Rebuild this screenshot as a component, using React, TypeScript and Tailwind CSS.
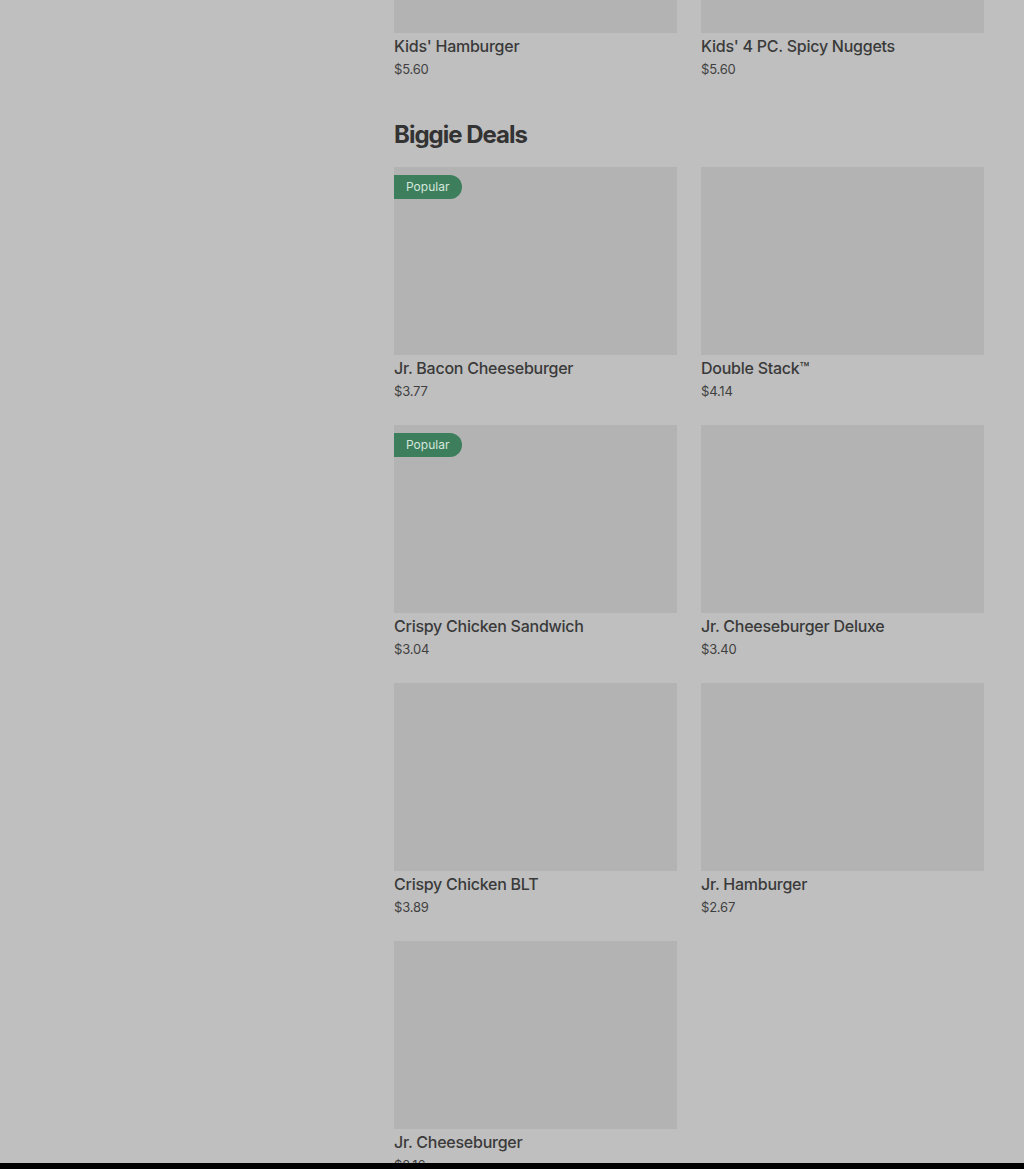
import React from "react";

type Item = { name: string; price: string; popular?: boolean };

const kids: Item[] = [
  { name: "Kids' Hamburger", price: "$5.60" },
  { name: "Kids' 4 PC. Spicy Nuggets", price: "$5.60" },
];

const biggie: Item[] = [
  { name: "Jr. Bacon Cheeseburger", price: "$3.77", popular: true },
  { name: "Double Stack™", price: "$4.14" },
  { name: "Crispy Chicken Sandwich", price: "$3.04", popular: true },
  { name: "Jr. Cheeseburger Deluxe", price: "$3.40" },
  { name: "Crispy Chicken BLT", price: "$3.89" },
  { name: "Jr. Hamburger", price: "$2.67" },
  { name: "Jr. Cheeseburger", price: "$2.16" },
];

function Card({ item }: { item: Item }) {
  return (
    <div className="flex flex-col pb-[24px]">
      <div className="relative h-[188px] bg-[#b3b3b3]">
        {item.popular && (
          <div className="absolute left-0 top-[8px] flex h-[24px] items-center rounded-r-full bg-[#3d7e5c] pl-[12px] pr-[13px] text-[12px] leading-none text-[#d6e6dc]">
            Popular
          </div>
        )}
      </div>
      <div className="h-[25px] pt-[1px] text-[16px] font-medium leading-[24px] tracking-[-0.25px] text-[#3a3a3a]">
        {item.name}
      </div>
      <div className="h-[21px] pt-[1px] text-[13px] leading-[20px] tracking-[-0.2px] text-[#3f3f3f]">
        {item.price}
      </div>
    </div>
  );
}

export default function App() {
  return (
    <div
      className="flex h-[1169px] w-[1024px] flex-col overflow-hidden bg-[#bfbfbf]"
      style={{ fontFamily: "Inter, 'Noto Sans', sans-serif" }}
    >
      <div className="flex-1 overflow-hidden">
        <div className="mt-[-155px] flex">
          <div className="w-[394px] shrink-0" />
          <div className="w-[590px]">
            <div className="grid grid-cols-2 gap-x-[24px]">
              {kids.map((it) => (
                <Card key={it.name} item={it} />
              ))}
            </div>
            <h2 className="mt-[16px] mb-[16px] h-[32px] text-[24px] font-bold leading-[32px] tracking-[-1px] text-[#333333]">
              Biggie Deals
            </h2>
            <div className="grid grid-cols-2 gap-x-[24px]">
              {biggie.map((it) => (
                <Card key={it.name} item={it} />
              ))}
            </div>
          </div>
        </div>
      </div>
      <div className="h-[6px] shrink-0 bg-black" />
    </div>
  );
}
